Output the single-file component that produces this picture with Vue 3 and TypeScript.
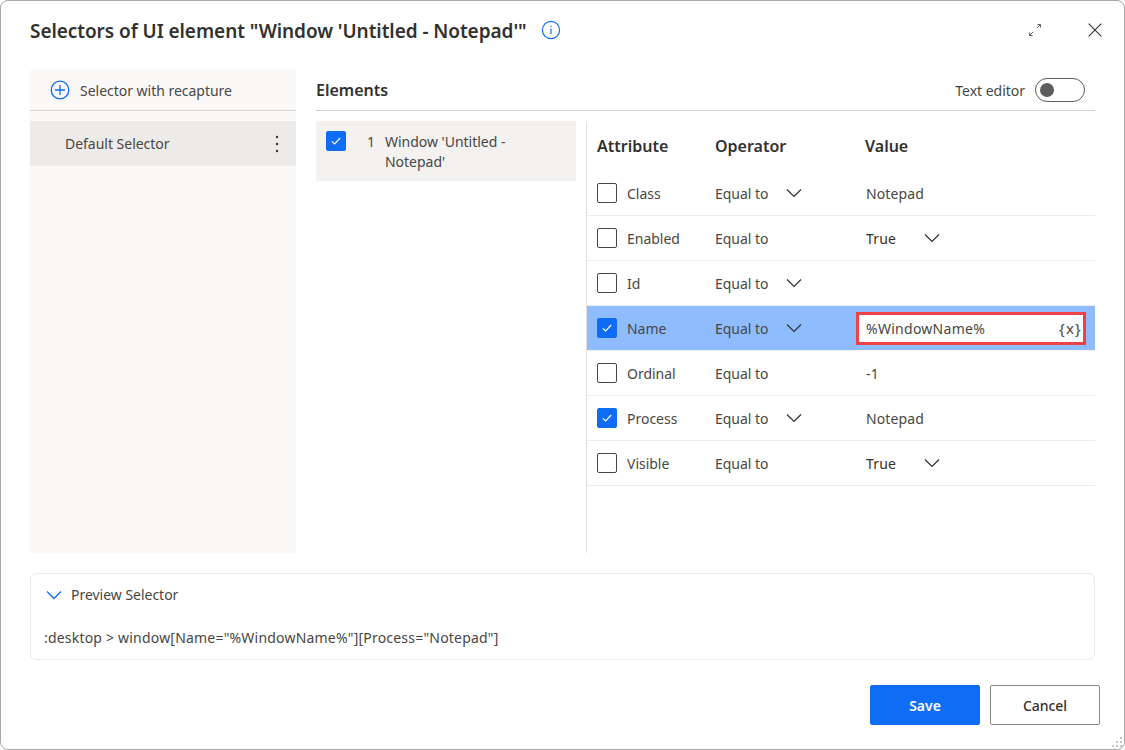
<template>
  <div class="dialog">
    <header class="title-bar">
      <h1 class="title">Selectors of UI element "Window 'Untitled - Notepad'"</h1>
      <svg class="info" width="20" height="20" viewBox="0 0 20 20">
        <circle cx="10" cy="10" r="8.6" fill="none" stroke="#0f6cf5" stroke-width="1.2" />
        <rect x="9.4" y="8.6" width="1.2" height="5.6" fill="#0f6cf5" />
        <rect x="9.4" y="5.8" width="1.2" height="1.4" fill="#0f6cf5" />
      </svg>
      <div class="title-actions">
        <svg width="14" height="14" viewBox="0 0 14 14" fill="none" stroke="#605e5c" stroke-width="1">
          <path d="M1.5 12.5 5 9M9 5l3.5-3.5M9.5 1.5h3v3M1.5 9.500v3h3" />
        </svg>
        <svg width="14" height="14" viewBox="0 0 14 14" fill="none" stroke="#323130" stroke-width="1.1">
          <path d="M.7.7l12.600 12.600M13.300.7.700 13.300" />
        </svg>
      </div>
    </header>

    <main class="body">
      <aside class="sidebar">
        <div class="recapture">
          <svg width="20" height="20" viewBox="0 0 20 20" fill="none" stroke="#0f6cf5" stroke-width="1.3">
            <circle cx="10" cy="10" r="8.800" />
            <path d="M10 5v10M5 10h10" />
          </svg>
          <span>Selector with recapture</span>
        </div>
        <div class="selector-row">
          <span>Default Selector</span>
          <svg width="4" height="20" viewBox="0 0 4 20" fill="#323130">
            <circle cx="2" cy="3" r="1.200" />
            <circle cx="2" cy="10" r="1.200" />
            <circle cx="2" cy="17" r="1.200" />
          </svg>
        </div>
      </aside>

      <section class="elements">
        <div class="elements-head">
          <h2>Elements</h2>
          <div class="text-editor">
            <span>Text editor</span>
            <span class="toggle"><i /></span>
          </div>
        </div>
        <div class="elements-body">
          <div class="tree">
            <div class="tree-item">
              <span class="check on">
                <svg width="12" height="12" viewBox="0 0 12 12" fill="none" stroke="#fff" stroke-width="1.100">
                  <path d="M1.800 6.300 4.600 9l5.600-6" />
                </svg>
              </span>
              <span class="tree-num">1</span>
              <span class="tree-label">Window 'Untitled - Notepad'</span>
            </div>
          </div>
          <div class="attributes">
            <div class="attr-head">
              <span class="col-attr">Attribute</span>
              <span class="col-op">Operator</span>
              <span>Value</span>
            </div>
            <div
              v-for="row in rows"
              :key="row.name"
              class="attr-row"
              :class="{ active: row.input }"
            >
              <div class="col-attr attr-name">
                <span class="check" :class="{ on: row.checked }">
                  <svg v-if="row.checked" width="12" height="12" viewBox="0 0 12 12" fill="none" stroke="#fff" stroke-width="1.100">
                    <path d="M1.800 6.300 4.600 9l5.600-6" />
                  </svg>
                </span>
                <span>{{ row.name }}</span>
              </div>
              <div class="col-op op">
                <span>Equal to</span>
                <svg v-if="row.opMenu" width="16" height="10" viewBox="0 0 16 10" fill="none" stroke="#323130" stroke-width="1.200">
                  <path d="M1 1.500l7 7 7-7" />
                </svg>
              </div>
              <div v-if="row.input" class="value-input">
                <span>{{ row.value }}</span>
                <span class="var-btn">{x}</span>
              </div>
              <div v-else class="value">
                <span :class="{ dark: row.valueMenu }">{{ row.value }}</span>
                <svg v-if="row.valueMenu" width="16" height="10" viewBox="0 0 16 10" fill="none" stroke="#323130" stroke-width="1.200">
                  <path d="M1 1.500l7 7 7-7" />
                </svg>
              </div>
            </div>
          </div>
        </div>
      </section>
    </main>

    <section class="preview">
      <div class="preview-head">
        <svg width="16" height="10" viewBox="0 0 16 10" fill="none" stroke="#0f6cf5" stroke-width="1.300">
          <path d="M1 1.500l7 7 7-7" />
        </svg>
        <span>Preview Selector</span>
      </div>
      <div class="preview-code">:desktop &gt; window[Name="%WindowName%"][Process="Notepad"]</div>
    </section>

    <footer class="actions">
      <button class="btn primary">Save</button>
      <button class="btn">Cancel</button>
    </footer>

    <svg class="grip" width="14" height="14" viewBox="0 0 14 14" fill="#c8c6c4">
      <rect x="10" y="2" width="2" height="2" />
      <rect x="6" y="6" width="2" height="2" />
      <rect x="10" y="6" width="2" height="2" />
      <rect x="2" y="10" width="2" height="2" />
      <rect x="6" y="10" width="2" height="2" />
      <rect x="10" y="10" width="2" height="2" />
    </svg>
  </div>
</template>

<script setup lang="ts">
interface AttrRow {
  name: string;
  checked: boolean;
  opMenu: boolean;
  value: string;
  valueMenu?: boolean;
  input?: boolean;
}

const rows: AttrRow[] = [
  { name: 'Class', checked: false, opMenu: true, value: 'Notepad' },
  { name: 'Enabled', checked: false, opMenu: false, value: 'True', valueMenu: true },
  { name: 'Id', checked: false, opMenu: true, value: '' },
  { name: 'Name', checked: true, opMenu: true, value: '%WindowName%', input: true },
  { name: 'Ordinal', checked: false, opMenu: false, value: '-1' },
  { name: 'Process', checked: true, opMenu: true, value: 'Notepad' },
  { name: 'Visible', checked: false, opMenu: false, value: 'True', valueMenu: true }
];
</script>

<style>
html, body { background: #fff; }
</style>

<style scoped>
.dialog {
  position: relative;
  box-sizing: border-box;
  width: 1125px;
  height: 750px;
  overflow: hidden;
  display: flex;
  flex-direction: column;
  padding: 0 29px 0 29px;
  background: #fff;
  border: 1px solid #a8a8a8;
  border-radius: 8px;
  font-family: "Noto Sans", "Open Sans", sans-serif;
  font-size: 14px;
  letter-spacing: -0.02px;
  color: #323130;
}

.title-bar {
  display: flex;
  align-items: center;
  height: 69px;
  flex: none;
  padding-bottom: 9px;
  box-sizing: border-box;
}
.title {
  margin: 0;
  font-size: 19px;
  font-weight: 600;
  letter-spacing: -0.06px;
  white-space: nowrap;
}
.info { margin-left: 14px; margin-top: -3px; }
.title-actions {
  margin-left: auto;
  margin-right: -7px;
  display: flex;
  align-items: center;
  gap: 46px;
  margin-top: -3px;
}

.body {
  flex: none;
  height: 483px;
  display: flex;
  gap: 20px;
}

.sidebar {
  width: 266px;
  background: #faf9f8;
  flex: none;
}
.recapture {
  height: 41px;
  box-sizing: border-box;
  display: flex;
  align-items: center;
  gap: 10px;
  padding-left: 20px;
  border-bottom: 1px solid #d8d6d4;
  color: #484644;
}
.selector-row {
  margin-top: 10px;
  height: 45px;
  display: flex;
  align-items: center;
  justify-content: space-between;
  padding: 0 17px 0 35px;
  background: #edebe9;
  color: #484644;
}

.elements {
  flex: 1;
  display: flex;
  flex-direction: column;
  min-width: 0;
}
.elements-head {
  height: 41px;
  flex: none;
  box-sizing: border-box;
  display: flex;
  align-items: center;
  justify-content: space-between;
  border-bottom: 1px solid #d2d0ce;
}
.elements-head h2 {
  margin: 0;
  font-size: 16px;
  font-weight: 600;
  letter-spacing: 0;
}
.text-editor {
  display: flex;
  align-items: center;
  gap: 10px;
  padding-right: 10px;
  color: #484644;
}
.toggle {
  box-sizing: border-box;
  width: 50px;
  height: 24px;
  padding: 0 0 0 4px;
  display: flex;
  align-items: center;
  border: 1px solid #605e5c;
  border-radius: 12px;
}
.toggle i {
  width: 14px;
  height: 14px;
  border-radius: 50%;
  background: #605e5c;
}

.elements-body {
  flex: 1;
  display: flex;
  margin-top: 10px;
  min-height: 0;
}
.tree {
  width: 270px;
  flex: none;
  border-right: 1px solid #e1dfdd;
}
.tree-item {
  width: 260px;
  height: 60px;
  box-sizing: border-box;
  display: flex;
  align-items: flex-start;
  padding: 10px 0 0 10px;
  background: #f3f2f1;
  line-height: 20px;
  color: #484644;
}
.tree-num {
  margin-left: 21px;
  width: 18px;
  flex: none;
  padding-top: 1px;
}
.tree-label { width: 150px; padding-top: 1px; }

.check {
  box-sizing: border-box;
  width: 20px;
  height: 20px;
  flex: none;
  display: inline-flex;
  align-items: center;
  justify-content: center;
  background: #fff;
  border: 1px solid #484644;
  border-radius: 2px;
}
.check.on {
  background: #0f6cf5;
  border-color: #0f6cf5;
}

.attributes {
  flex: 1;
  min-width: 0;
}
.attr-head {
  height: 50px;
  display: flex;
  align-items: center;
  font-size: 16px;
  font-weight: 600;
  letter-spacing: 0;
}
.attr-row {
  box-sizing: border-box;
  height: 45px;
  display: flex;
  align-items: center;
  border-bottom: 1px solid #edebe9;
  color: #484644;
}
.attr-row.active {
  background: #8fbcff;
  border-bottom-color: #f3f2f1;
}
.col-attr {
  width: 128px;
  flex: none;
  padding-left: 10px;
  box-sizing: border-box;
}
.col-op {
  width: 150px;
  flex: none;
}
.attr-name {
  display: flex;
  align-items: center;
  gap: 10px;
}
.op {
  display: flex;
  align-items: center;
  gap: 17px;
}
.value {
  display: flex;
  align-items: center;
  gap: 28px;
  padding-left: 1px;
  letter-spacing: 0.13px;
}
.value .dark { color: #323130; }
.value-input {
  box-sizing: border-box;
  width: 230px;
  height: 33px;
  margin-left: -9px;
  padding: 0 1px 0 7px;
  display: flex;
  align-items: center;
  justify-content: space-between;
  background: #fff;
  border: 3px solid #f04048;
  letter-spacing: 0.27px;
}
.var-btn {
  font-size: 15px;
  letter-spacing: 1.2px;
  color: #484644;
}

.preview {
  flex: none;
  height: 87px;
  margin-top: 20px;
  box-sizing: border-box;
  border: 1px solid #edebe9;
  border-radius: 6px;
  padding: 0 12px;
}
.preview-head {
  height: 41px;
  display: flex;
  align-items: center;
  gap: 9px;
  padding-left: 3px;
  color: #484644;
}
.preview-code {
  margin-top: 13px;
  padding-left: 1px;
  line-height: 20px;
  color: #484644;
  letter-spacing: 0.2px;
  white-space: nowrap;
}

.actions {
  flex: none;
  display: flex;
  justify-content: flex-end;
  gap: 10px;
  margin-top: 25px;
  margin-right: -5px;
}
.btn {
  box-sizing: border-box;
  width: 110px;
  height: 40px;
  padding: 0;
  font: inherit;
  font-weight: 500;
  letter-spacing: inherit;
  color: #323130;
  background: #fff;
  border: 1px solid #8a8886;
  border-radius: 2px;
}
.btn.primary {
  background: #0f6cf5;
  border-color: #0f6cf5;
  color: #fff;
  font-weight: 600;
}

.grip {
  position: absolute;
  right: 0;
  bottom: 0;
}
</style>
